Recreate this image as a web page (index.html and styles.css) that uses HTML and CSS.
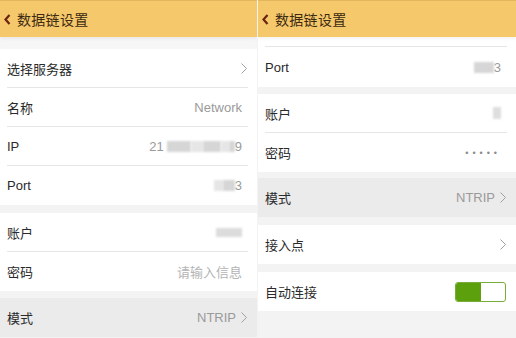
FILE: index.html
```html
<!DOCTYPE html>
<html>
<head>
  <meta charset="utf-8">
  <link rel="stylesheet" href="styles.css">
</head>
<body>
  <div class="screen left">
    <div class="header">
      <svg class="back" width="7" height="11" viewBox="0 0 7 11"><polyline points="5.5,1 1.5,5.5 5.5,10" fill="none" stroke="#6b2412" stroke-width="2.2"/></svg>
      <span class="title">数据链设置</span>
    </div>
    <div class="gap top"></div>
    <div class="group">
      <div class="row"><span class="label">选择服务器</span><span class="value"></span><svg class="chev" width="6" height="11" viewBox="0 0 6 11"><polyline points="0.5,0.5 5.5,5.5 0.5,10.5" fill="none" stroke="#a0a0a0" stroke-width="1"/></svg></div>
      <div class="row"><span class="label">名称</span><span class="value">Network</span></div>
      <div class="row"><span class="label">IP</span><span class="value">21<i class="blur first" style="width:24px"></i><i class="blur light" style="width:12px"></i><i class="blur" style="width:18px"></i><i class="blur light" style="width:8px"></i><i class="blur" style="width:6px"></i>9</span></div>
      <div class="row last"><span class="label">Port</span><span class="value"><i class="blur light" style="width:9px"></i><i class="blur" style="width:12px"></i>3</span></div>
    </div>
    <div class="gap g8"></div>
    <div class="group">
      <div class="row"><span class="label">账户</span><span class="value"><i class="blur dark" style="width:26px"></i></span></div>
      <div class="row last"><span class="label">密码</span><span class="value hint">请输入信息</span></div>
    </div>
    <div class="gap"></div>
    <div class="group">
      <div class="row last pressed"><span class="label">模式</span><span class="value">NTRIP</span><svg class="chev" width="6" height="11" viewBox="0 0 6 11"><polyline points="0.5,0.5 5.5,5.5 0.5,10.5" fill="none" stroke="#a0a0a0" stroke-width="1"/></svg></div>
    </div>
  </div>

  <div class="screen right">
    <div class="header">
      <svg class="back" width="7" height="11" viewBox="0 0 7 11"><polyline points="5.5,1 1.5,5.5 5.5,10" fill="none" stroke="#6b2412" stroke-width="2.2"/></svg>
      <span class="title">数据链设置</span>
    </div>
    <div class="group">
      <div class="row cut"></div>
      <div class="row last tall"><span class="label">Port</span><span class="value"><i class="blur" style="width:20px"></i>3</span></div>
    </div>
    <div class="gap"></div>
    <div class="group">
      <div class="row"><span class="label">账户</span><span class="value"><i class="blur tall" style="width:8px"></i></span></div>
      <div class="row last"><span class="label">密码</span><span class="value dots">•••••</span></div>
    </div>
    <div class="gap g6"></div>
    <div class="group">
      <div class="row last pressed"><span class="label">模式</span><span class="value">NTRIP</span><svg class="chev" width="6" height="11" viewBox="0 0 6 11"><polyline points="0.5,0.5 5.5,5.5 0.5,10.5" fill="none" stroke="#a0a0a0" stroke-width="1"/></svg></div>
    </div>
    <div class="gap g8"></div>
    <div class="group">
      <div class="row last"><span class="label">接入点</span><span class="value"></span><svg class="chev" width="6" height="11" viewBox="0 0 6 11"><polyline points="0.5,0.5 5.5,5.5 0.5,10.5" fill="none" stroke="#a0a0a0" stroke-width="1"/></svg></div>
    </div>
    <div class="gap g8"></div>
    <div class="group">
      <div class="row last"><span class="label">自动连接</span><span class="value"></span><span class="toggle"><span class="knob"></span></span></div>
    </div>
  </div>
</body>
</html>
```

FILE: styles.css
```css
body {
  margin: 0;
  display: flex;
  width: 516px;
  height: 338px;
  overflow: hidden;
  background: #f3f3f3;
  font-family: "Liberation Sans", "Noto Sans CJK SC", sans-serif;
}
.screen {
  width: 258px;
  height: 338px;
  overflow: hidden;
  background: #f3f3f3;
  display: flex;
  flex-direction: column;
}
.screen.left {
  width: 257px;
  margin-right: 1px;
}
.header {
  flex: none;
  height: 36px;
  border-top: 1px solid #e2b65d;
  background: #f6c86c;
  display: flex;
  align-items: center;
  gap: 6px;
  padding-left: 4px;
  box-shadow: 0 2px 3px rgba(0, 0, 0, 0.05);
  position: relative;
  z-index: 1;
}
.title {
  font-size: 14px;
  color: #3c2a12;
  letter-spacing: 0.3px;
}
.gap {
  flex: none;
  height: 7px;
}
.gap.top {
  height: 12px;
  background: #f6f6f6;
}
.gap.g6 {
  height: 6px;
}
.gap.g8 {
  height: 8px;
}
.group {
  flex: none;
  background: #fff;
}
.row {
  height: 38px;
  margin: 0 9px 0 7px;
  padding-right: 1px;
  display: flex;
  align-items: center;
  gap: 5px;
  border-bottom: 1px solid #e6e6e6;
  font-size: 13px;
}
.row.last {
  border-bottom: none;
  height: 39px;
}
.row.tall {
  height: 40px;
}
.row.cut {
  height: 9px;
}
.row.pressed {
  background: #ebebeb;
  margin: 0;
  padding: 0 10px 0 7px;
}
.label {
  color: #2a2a2a;
  flex: none;
}
.value {
  flex: 1;
  color: #9a9a9a;
  display: flex;
  justify-content: flex-end;
  align-items: center;
}
.row > .value:last-child {
  padding-right: 5px;
}
.value.hint {
  color: #b4b4b4;
}
.value.dots {
  letter-spacing: 4px;
  font-size: 9px;
  color: #8a8a8a;
}
.chev {
  flex: none;
}
.blur {
  display: inline-block;
  height: 11px;
  background: #d6d6d6;
  filter: blur(1.2px);
}
.blur.light {
  background: #e6e6e6;
}
.blur.first {
  margin-left: 3px;
}
.blur.dark {
  background: #dcdcdc;
  height: 9px;
}
.blur.tall {
  height: 12px;
  background: #dedede;
}
.toggle {
  flex: none;
  width: 49px;
  height: 18px;
  border: 1px solid #79ad3a;
  border-radius: 3px;
  background: #fff;
  display: flex;
}
.knob {
  width: 25px;
  height: 18px;
  background: #5ca00d;
  border-radius: 2px 0 0 2px;
}
```
